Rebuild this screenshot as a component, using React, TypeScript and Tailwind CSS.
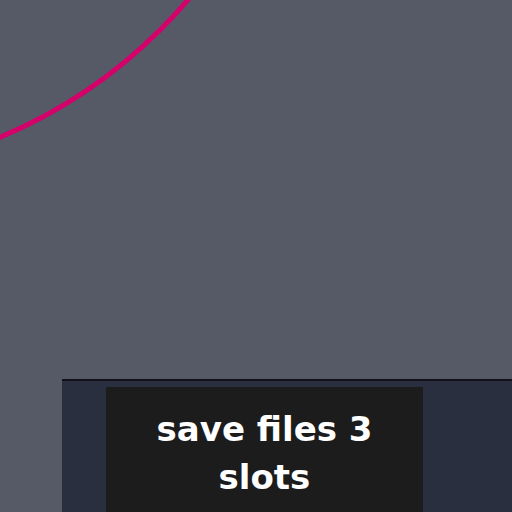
export default function App() {
  return (
    <div className="w-[512px] h-[512px] bg-[#555a66] flex flex-col overflow-hidden">
      <div className="h-[379px] shrink-0">
        <svg width="512" height="379" viewBox="0 0 512 379">
          <circle cx="-193" cy="-324" r="500" fill="none" stroke="#d6006b" strokeWidth="5" />
        </svg>
      </div>
      <div className="ml-[62px] flex-1 bg-[#2a2f3f] border-t-2 border-[#111318] pt-[6px] pl-[44px]">
        <div className="w-[317px] h-full bg-[#1c1c1c] flex flex-col items-center pt-[18px]">
          <div
            className="text-white text-[34px] leading-[48px] font-bold text-center"
            style={{ fontFamily: "'DejaVu Sans', sans-serif" }}
          >
            save files 3<br />slots
          </div>
        </div>
      </div>
    </div>
  );
}
